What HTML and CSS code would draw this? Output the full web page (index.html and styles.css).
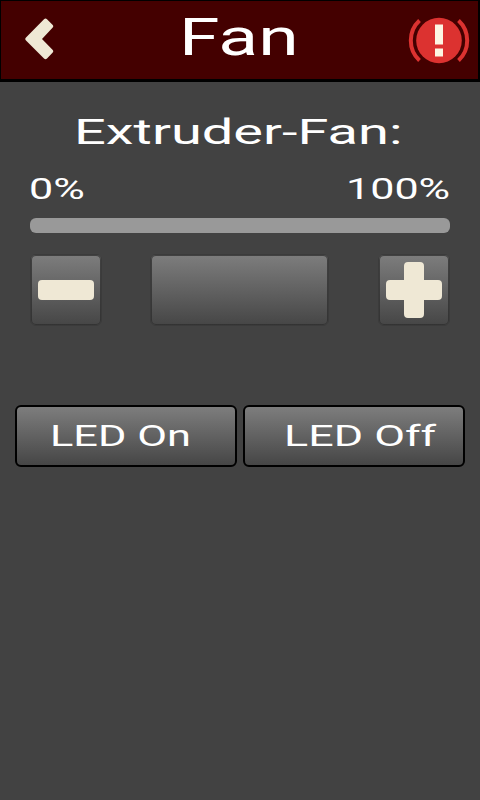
FILE: index.html
```html
<!DOCTYPE html>
<html lang="en">
<head>
<meta charset="utf-8">
<title>Fan</title>
<link rel="stylesheet" href="styles.css">
</head>
<body>
<header class="header">
  <svg class="back" viewBox="0 0 30 43" aria-hidden="true"><path d="M19 1.2Q20.5-.3 22 1.2L27.5 6.8Q29 8.3 27.5 9.8L17 21L27.5 31.7Q29 33.2 27.5 34.7L22 40.5Q20.5 42 19 40.5L1 22.5Q-.5 21 1 19.5Z" fill="#efe8d5"/></svg>
  <h1 class="title"><span class="wide title-text">Fan</span></h1>
  <svg class="stop" viewBox="0 0 62 48" aria-hidden="true">
    <circle cx="31" cy="23.5" r="22.8" fill="#dc3230"/>
    <path d="M11.500 3.500Q2.800 11.500 2.800 23.500T11.500 43.500M50.500 3.500Q59.200 11.500 59.200 23.500T50.500 43.500" fill="none" stroke="#dc3230" stroke-width="4"/>
    <path d="M27 7.500h8v20h-8zM27 31.500h8v8h-8z" fill="#fdf6e3"/>
  </svg>
</header>
<main>
  <h2 class="heading"><span class="wide heading-text">Extruder-Fan:</span></h2>
  <div class="range"><span class="wide zero">0%</span><span class="wide full">100%</span></div>
  <div class="bar"></div>
  <div class="controls">
    <button class="key" aria-label="Decrease"><svg viewBox="0 0 56 56"><rect y="18" width="56" height="20" rx="4"/></svg></button>
    <div class="key value"></div>
    <button class="key" aria-label="Increase"><svg viewBox="0 0 56 56"><path d="M22 0H34Q38 0 38 4V18H52Q56 18 56 22V34Q56 38 52 38H38V52Q38 56 34 56H22Q18 56 18 52V38H4Q0 38 0 34V22Q0 18 4 18H18V4Q18 0 22 0Z"/></svg></button>
  </div>
  <div class="leds">
    <button class="led"><span class="wide led-on">LED On</span></button>
    <button class="led"><span class="wide led-off">LED Off</span></button>
  </div>
</main>
</body>
</html>
```

FILE: styles.css
```css
* { box-sizing: border-box; }
body {
  margin: 0;
  height: 800px;
  background: #424242;
  color: #fff;
  font-family: Roboto, sans-serif;
  overflow: hidden;
}
h1, h2 { margin: 0; font-weight: 400; }
button { padding: 0; color: inherit; font-family: inherit; }
svg { display: block; }
.wide {
  display: inline-block;
  white-space: nowrap;
  transform-origin: 0 50%;
}
.header {
  display: grid;
  grid-template-columns: 180px 1fr 62px;
  height: 82px;
  padding-right: 8px;
  background: #440000;
  border: solid #000;
  border-width: 1px 2px 3px 1px;
}
.back { width: 30px; height: 43px; margin: 17px 0 0 24px; }
.title { font-size: 52px; line-height: 74px; }
.title-text { margin-left: -2px; transform: scaleX(1.41); }
.stop { width: 62px; height: 48px; margin-top: 15.5px; }
main { padding: 0 15px; }
.heading { height: 86px; padding: 31px 0 0 59px; font-size: 35px; line-height: 40px; }
.heading-text { transform: scaleX(1.6); }
.range { display: flex; height: 50px; padding: 0 15px; font-size: 29.5px; line-height: 42px; }
.zero { width: 317px; margin-left: -1px; transform: scaleX(1.46); }
.full { transform: scaleX(1.46); }
.bar { height: 15px; margin: 0 15px; border-radius: 6px; background: #999; }
.controls { display: flex; justify-content: space-between; margin: 21px 15px 0; height: 72px; }
.key {
  display: grid;
  place-items: center;
  width: 72px;
  height: 72px;
  border: 1px solid #3b3b3b;
  border-radius: 6px;
  background: linear-gradient(#7d7d7d, #464646);
  box-shadow: inset 0 0 0 1px rgba(45, 45, 45, 0.75);
}
.key svg { width: 56px; height: 56px; fill: #efe8d5; }
.value { width: 179px; margin-left: -2px; }
.leds { display: flex; gap: 6px; margin-top: 79px; }
.led {
  width: 222px;
  height: 62px;
  border: 2px solid #000;
  border-radius: 6px;
  background: linear-gradient(#7d7d7d, #464646);
  font-size: 29.5px;
  line-height: 58px;
  text-align: left;
}
.led-on { margin-left: 33px; transform: scaleX(1.47); }
.led-off { margin-left: 39px; transform: scaleX(1.52); }
```
